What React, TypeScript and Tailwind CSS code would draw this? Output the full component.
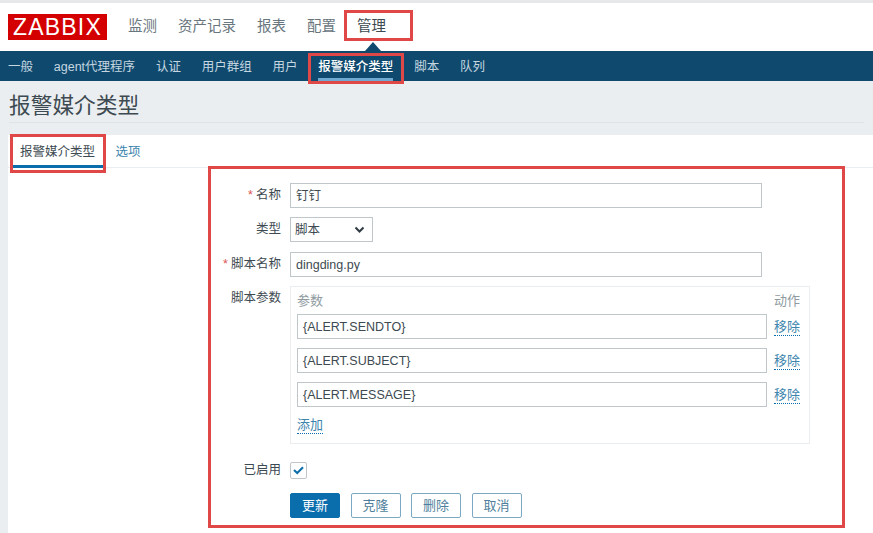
const font = { fontFamily: '"Liberation Sans", "Noto Sans CJK SC", sans-serif' };

const topNav = ["监测", "资产记录", "报表", "配置", "管理"];
const subNav = ["一般", "agent代理程序", "认证", "用户群组", "用户", "报警媒介类型", "脚本", "队列"];
const params = ["{ALERT.SENDTO}", "{ALERT.SUBJECT}", "{ALERT.MESSAGE}"];

function Label({ text, required }: { text: string; required?: boolean }) {
  return (
    <div className="w-[273px] shrink-0 text-right text-[12.5px] leading-[25px] text-[#3d4a51]">
      {required && <span className="mr-[3px] text-[#d9534f]">*</span>}
      {text}
    </div>
  );
}

function TextBox({ value, className }: { value: string; className: string }) {
  return (
    <div className={`h-[25px] border border-[#c0c7cb] bg-white px-[5px] text-[12.5px] leading-[24px] text-[#3d4a51] ${className}`}>
      {value}
    </div>
  );
}

function Action({ text, primary }: { text: string; primary?: boolean }) {
  return (
    <div
      className={`flex h-[25px] w-[50px] items-center justify-center rounded-[2px] border pt-[1px] text-[13px] ${
        primary ? "border-[#0a6ead] bg-[#0a6ead] text-white" : "border-[#7ba9c4] bg-white text-[#4f7f9c]"
      }`}
    >
      {text}
    </div>
  );
}

export default function App() {
  return (
    <div className="relative h-[533px] w-[873px] overflow-hidden bg-[#ebeef0]" style={font}>
      <div className="h-[3px] bg-[#e6e8ea]" />

      <header className="flex h-[48px] items-center bg-white pl-[8px]">
        <div className="flex h-[26px] w-[99px] items-center justify-center bg-[#d40000] text-[23px] tracking-[1.2px] text-white">
          ZABBIX
        </div>
        <nav className="ml-[21px] mt-[-1px] flex gap-[21px] text-[14.5px] text-[#69767d]">
          {topNav.map((n) => (
            <span key={n} className={n === "管理" ? "text-[#3d4a51]" : ""}>
              {n}
            </span>
          ))}
        </nav>
      </header>

      <nav className="flex h-[30px] gap-[20.8px] bg-[#0f4a6e] pl-[8px] text-[12.5px] text-[#c5d6e0]">
        {subNav.map((n) => (
          <span
            key={n}
            className={`flex h-[30px] items-center border-b-[3px] pt-[6px] ${
              n === "报警媒介类型" ? "border-[#6fa8d0] font-medium text-white" : "border-transparent"
            }`}
          >
            {n}
          </span>
        ))}
      </nav>

      <div className="ml-[9px] mr-[9px] mt-[12px] h-[30px] border-b border-[#dfe3e6] text-[21.7px] leading-[26px] text-[#3d4a51]">
        报警媒介类型
      </div>

      <main className="ml-[8px] mt-[12px] h-[400px] bg-white">
        <div className="flex h-[33px] border-b border-[#ebeef0] pl-[4px] text-[12.5px]">
          <span className="flex h-[33px] items-center border-b-[3px] border-[#0a6ead] px-[8px] pt-[4px] text-[#3d4a51]">
            报警媒介类型
          </span>
          <span className="ml-[12.5px] flex h-[33px] items-center pt-[1px] text-[#3d85ad]">选项</span>
        </div>

        <div className="flex flex-col pt-[15px]">
          <div className="flex h-[25px] gap-[9px]">
            <Label text="名称" required />
            <TextBox value="钉钉" className="w-[472px]" />
          </div>

          <div className="mt-[9px] flex h-[25px] gap-[9px]">
            <Label text="类型" />
            <div className="flex h-[25px] w-[83px] items-center justify-between border border-[#c0c7cb] bg-white pl-[4px] pr-[7px] pt-[1px] text-[12.5px] text-[#3d4a51]">
              脚本
              <svg width="11" height="8" viewBox="0 0 11 8" fill="none" stroke="#2f3b42" strokeWidth="2">
                <path d="M1.5 1.5 L5.5 5.5 L9.5 1.5" />
              </svg>
            </div>
          </div>

          <div className="mt-[10px] flex h-[25px] gap-[9px]">
            <Label text="脚本名称" required />
            <TextBox value="dingding.py" className="w-[472px]" />
          </div>

          <div className="mt-[9px] flex gap-[9px]">
            <Label text="脚本参数" />
            <div className="flex h-[158px] w-[520px] flex-col border border-[#ebeef0] px-[6px] pt-[5px] text-[13px]">
              <div className="flex h-[22px] justify-between pr-[3px] leading-[17px] text-[#8f9ba1]">
                <span>参数</span>
                <span>动作</span>
              </div>
              <div className="flex flex-col gap-[9px]">
                {params.map((p) => (
                  <div key={p} className="flex items-center gap-[7px]">
                    <TextBox value={p} className="w-[470px]" />
                    <span className="mt-[1px] border-b border-dotted border-[#0a6ead] leading-[16px] text-[#3d85ad]">移除</span>
                  </div>
                ))}
              </div>
              <span className="mt-[10px] w-fit border-b border-dotted border-[#0a6ead] leading-[16px] text-[#3d85ad]">
                添加
              </span>
            </div>
          </div>

          <div className="mt-[14px] flex h-[25px] gap-[9px]">
            <Label text="已启用" />
            <div className="mt-[4px] flex h-[17px] w-[17px] items-center justify-center rounded-[2px] border border-[#c0c7cb] bg-white">
              <svg width="11" height="9" viewBox="0 0 11 9" fill="none" stroke="#0a6ead" strokeWidth="2">
                <path d="M1 4 L4.2 7 L10 1.2" />
              </svg>
            </div>
          </div>

          <div className="ml-[282px] mt-[10px] flex gap-[10.5px]">
            <Action text="更新" primary />
            <Action text="克隆" />
            <Action text="删除" />
            <Action text="取消" />
          </div>
        </div>
      </main>

      <div className="absolute left-[365px] top-[42px] h-0 w-0 border-x-[8px] border-b-[9px] border-x-transparent border-b-[#0f4a6e]" />
      <div className="absolute left-[344px] top-[10px] h-[31px] w-[69px] border-[3px] border-[#e04848]" />
      <div className="absolute left-[308px] top-[53px] h-[31px] w-[96px] border-[3px] border-[#e04848]" />
      <div className="absolute left-[10px] top-[134px] h-[39px] w-[96px] border-[3px] border-[#e04848]" />
      <div className="absolute left-[208px] top-[166px] h-[362px] w-[637px] border-[3px] border-[#e04848]" />
    </div>
  );
}
